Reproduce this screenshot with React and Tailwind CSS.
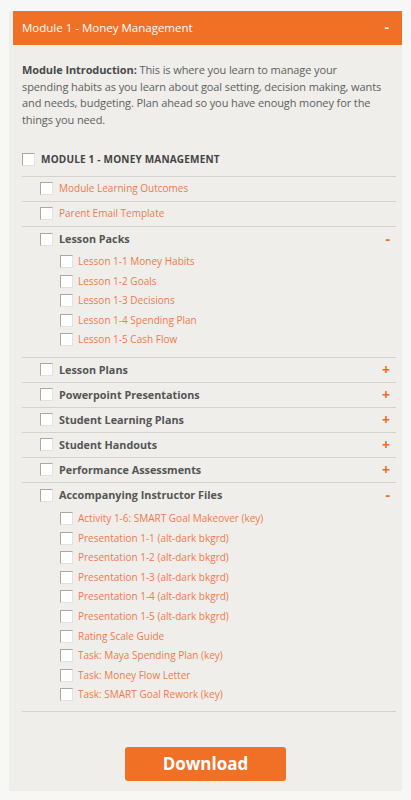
import React from "react";

const F = { fontFamily: '"Open Sans", "Noto Sans", sans-serif' };

function Box() {
  return (
    <span className="inline-block w-[13px] h-[13px] shrink-0 bg-white border border-t-[#a9a9a9] border-l-[#a9a9a9] border-r-[#e2e2e2] border-b-[#e2e2e2]" />
  );
}

function Sub({ label }) {
  return (
    <div className="flex items-center h-[25px] pl-[18px] border-b border-[#d3d2cd]">
      <Box />
      <span className="ml-[6px] text-[10px] text-[#f17a4b]">{label}</span>
    </div>
  );
}

function Group({ label, open }) {
  return (
    <div className="flex items-center h-[24px] pl-[18px] pr-[6px]">
      <Box />
      <span className="ml-[6px] text-[10.8px] font-bold text-[#555555]">{label}</span>
      <span className="ml-auto text-[14px] font-bold leading-none text-[#f26b22]">{open ? "-" : "+"}</span>
    </div>
  );
}

function Child({ label }) {
  return (
    <div className="flex items-center h-[19.6px] pl-[38px]">
      <Box />
      <span className="ml-[5px] text-[10px] text-[#f17a4b]">{label}</span>
    </div>
  );
}

export default function App() {
  const lessons = [
    "Lesson 1-1 Money Habits",
    "Lesson 1-2 Goals",
    "Lesson 1-3 Decisions",
    "Lesson 1-4 Spending Plan",
    "Lesson 1-5 Cash Flow",
  ];
  const closed = [
    "Lesson Plans",
    "Powerpoint Presentations",
    "Student Learning Plans",
    "Student Handouts",
    "Performance Assessments",
  ];
  const files = [
    "Activity 1-6: SMART Goal Makeover (key)",
    "Presentation 1-1 (alt-dark bkgrd)",
    "Presentation 1-2 (alt-dark bkgrd)",
    "Presentation 1-3 (alt-dark bkgrd)",
    "Presentation 1-4 (alt-dark bkgrd)",
    "Presentation 1-5 (alt-dark bkgrd)",
    "Rating Scale Guide",
    "Task: Maya Spending Plan (key)",
    "Task: Money Flow Letter",
    "Task: SMART Goal Rework (key)",
  ];
  return (
    <div className="min-h-[800px] bg-[#f7f7f6] pt-[11px] pl-[9px] pr-[9px] pb-[10px]" style={F}>
      <div className="bg-[#efeeea] pb-[10px]">
        <div className="ml-[4px] h-[34px] bg-[#f07026] flex items-center pl-[9px] pr-[13px] text-white">
          <span className="text-[11.5px]">Module 1 - Money Management</span>
          <span className="ml-auto text-[13px] font-bold">-</span>
        </div>
        <div className="pl-[13px] pr-[6px]">
          <p className="pt-[17px] text-[11px] leading-[16.7px] tracking-[-0.1px] text-[#606060] whitespace-nowrap">
            <span className="font-bold text-[#4a4a4a]">Module Introduction:</span> This is where you learn to manage your
            <br />
            spending habits as you learn about goal setting, decision making, wants
            <br />
            and needs, budgeting. Plan ahead so you have enough money for the
            <br />
            things you need.
          </p>
          <div className="mt-[14px] flex items-center h-[34px] border-b border-[#d3d2cd]">
            <Box />
            <span className="ml-[6px] text-[10px] font-bold text-[#444444] tracking-[0.2px]">MODULE 1 - MONEY MANAGEMENT</span>
          </div>
          <Sub label="Module Learning Outcomes" />
          <Sub label="Parent Email Template" />
          <div className="border-b border-[#d3d2cd] pb-[7px]">
            <div className="h-[25px] flex flex-col justify-center">
              <Group label="Lesson Packs" open />
            </div>
            {lessons.map((l) => (
              <Child key={l} label={l} />
            ))}
          </div>
          {closed.map((c) => (
            <div key={c} className="border-b border-[#d3d2cd]">
              <Group label={c} />
            </div>
          ))}
          <div className="border-b border-[#d3d2cd] pb-[6px]">
            <div className="h-[25px] flex flex-col justify-center">
              <Group label="Accompanying Instructor Files" open />
            </div>
            <div className="pt-[1px]">
              {files.map((f) => (
                <Child key={f} label={f} />
              ))}
            </div>
          </div>
          <div className="mt-[35px] flex justify-center pr-[7px]">
            <button className="w-[161px] h-[34px] rounded-[3px] bg-[#f07026] text-white text-[17px] font-bold">
              Download
            </button>
          </div>
        </div>
      </div>
    </div>
  );
}
